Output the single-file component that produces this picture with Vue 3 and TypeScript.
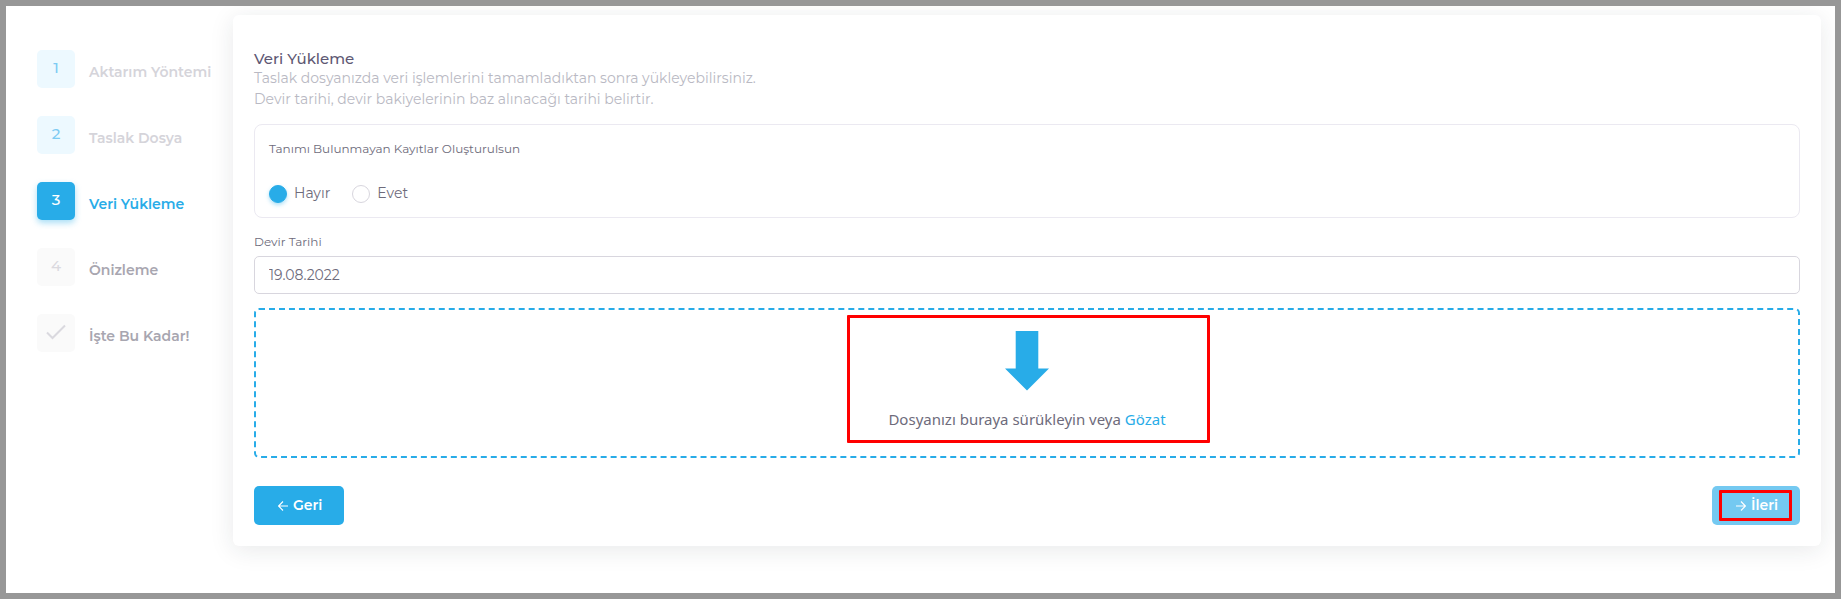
<script setup lang="ts">
import { ref } from 'vue'

type StepState = 'done' | 'active' | 'pending'

interface Step {
  id: number
  label: string
  state: StepState
  last?: boolean
}

const steps: Step[] = [
  { id: 1, label: 'Aktarım Yöntemi', state: 'done' },
  { id: 2, label: 'Taslak Dosya', state: 'done' },
  { id: 3, label: 'Veri Yükleme', state: 'active' },
  { id: 4, label: 'Önizleme', state: 'pending' },
  { id: 5, label: 'İşte Bu Kadar!', state: 'pending', last: true },
]

const createMissing = ref<'no' | 'yes'>('no')
const transferDate = ref('19.08.2022')
</script>

<template>
  <main class="wizard">
    <ol class="steps">
      <li v-for="step in steps" :key="step.id" class="step" :class="step.state">
        <span class="step-box">
          <svg v-if="step.last" width="20" height="16" viewBox="0 0 20 16" aria-hidden="true">
            <path d="M1 8.5 6.5 14 19 1.5" fill="none" stroke="currentColor" stroke-width="2" />
          </svg>
          <template v-else>{{ step.id }}</template>
        </span>
        <span class="step-label">{{ step.label }}</span>
      </li>
    </ol>

    <form class="card" @submit.prevent>
      <h1 class="title">Veri Yükleme</h1>
      <p class="description">
        Taslak dosyanızda veri işlemlerini tamamladıktan sonra yükleyebilirsiniz.<br />
        Devir tarihi, devir bakiyelerinin baz alınacağı tarihi belirtir.
      </p>

      <fieldset class="options" aria-labelledby="options-title">
        <div id="options-title" class="small-label">Tanımı Bulunmayan Kayıtlar Oluşturulsun</div>
        <div class="radios">
          <label class="radio">
            <input v-model="createMissing" type="radio" name="create-missing" value="no" />
            Hayır
          </label>
          <label class="radio">
            <input v-model="createMissing" type="radio" name="create-missing" value="yes" />
            Evet
          </label>
        </div>
      </fieldset>

      <label class="small-label date-label" for="transfer-date">Devir Tarihi</label>
      <input id="transfer-date" v-model="transferDate" class="date-input" type="text" />

      <div class="dropzone">
        <div class="drop-content">
          <svg class="drop-arrow" width="44" height="60" viewBox="0 0 44 60" aria-hidden="true">
            <path d="M10.7 0h22.6v37.5H44L22 59.5 0 37.5h10.7z" fill="currentColor" />
          </svg>
          <p class="drop-text">Dosyanızı buraya sürükleyin veya <a href="#">Gözat</a></p>
          <span class="mark mark-drop"></span>
        </div>
      </div>

      <div class="actions">
        <button type="button" class="btn">
          <svg width="10" height="10" viewBox="0 0 10 10" aria-hidden="true">
            <path d="M10 5H.8M5 .5.6 5 5 9.500" fill="none" stroke="currentColor" stroke-width="1.100" />
          </svg>
          Geri
        </button>
        <button type="button" class="btn next">
          <svg width="10" height="10" viewBox="0 0 10 10" aria-hidden="true">
            <path d="M0 5h9.200M5 .5 9.400 5 5 9.500" fill="none" stroke="currentColor" stroke-width="1.100" />
          </svg>
          İleri
          <span class="mark mark-next"></span>
        </button>
      </div>
    </form>
  </main>
</template>

<style>
body {
  background: #fff;
}
</style>

<style scoped>
.wizard,
.wizard * {
  box-sizing: border-box;
}

.wizard {
  display: grid;
  grid-template-columns: 227px minmax(0, 1fr);
  align-items: start;
  min-height: 100vh;
  padding: 9px 14px 40px 0;
  border: 6px solid #979797;
  background: #fff;
  color: #6e6b7b;
  font-family: Montserrat, Inter, "Liberation Sans", sans-serif;
  font-size: 14px;
  line-height: 21px;
  overflow: hidden;
}

.steps {
  display: flex;
  flex-direction: column;
  gap: 28px;
  margin: 0;
  padding: 35px 0 0 31px;
  list-style: none;
}

.step {
  display: flex;
  gap: 14px;
  height: 38px;
  white-space: nowrap;
}

.step-box {
  display: flex;
  justify-content: center;
  align-items: center;
  flex: none;
  width: 38px;
  height: 38px;
  padding-bottom: 3px;
  border-radius: 5px;
  font-size: 15px;
  font-weight: 500;
}

.step-label {
  padding-top: 12px;
  font-weight: 600;
}

.done .step-box {
  background: #edf9ff;
  color: #7dcbf3;
}

.done .step-label {
  color: #d5d4da;
}

.active .step-box {
  background: #28ace8;
  color: #fff;
  box-shadow: 0 3px 6px rgba(40, 172, 232, 0.4);
}

.active .step-label {
  color: #28ace8;
}

.pending .step-box {
  background: #fafafa;
  color: #dad9df;
}

.pending .step-label {
  color: #a8a6b0;
}

.card {
  display: flex;
  flex-direction: column;
  padding: 34px 21px 21px;
  border-radius: 6px;
  background: #fff;
  box-shadow: 0 4px 24px rgba(34, 41, 47, 0.1);
}

.title {
  margin: 0;
  color: #5e5873;
  font-size: 15px;
  font-weight: 500;
  line-height: 19px;
}

.description {
  margin: 0 0 14px;
  color: #b9b9c3;
}

.options {
  min-width: 0;
  height: 94px;
  margin: 0;
  padding: 14px;
  border: 1px solid #ebe9f1;
  border-radius: 8px;
}

.small-label {
  font-size: 12px;
  line-height: 20px;
}

.radios {
  display: flex;
  gap: 22px;
  margin-top: 24px;
}

.radio {
  display: flex;
  align-items: center;
  gap: 7px;
}

.radio input {
  appearance: none;
  width: 18px;
  height: 18px;
  margin: 0;
  border: 1px solid #d8d6de;
  border-radius: 50%;
  background: #fff;
}

.radio input:checked {
  border-color: #28ace8;
  background: #28ace8;
  box-shadow: 0 2px 4px rgba(40, 172, 232, 0.4);
}

.date-label {
  align-self: flex-start;
  margin: 14px 0 4px;
}

.date-input {
  width: 100%;
  height: 38px;
  padding: 0 14px;
  border: 1px solid #d8d6de;
  border-radius: 5px;
  background: #fff;
  color: #6e6b7b;
  font: inherit;
}

.dropzone {
  display: flex;
  justify-content: center;
  align-items: flex-start;
  height: 150px;
  margin-top: 14px;
  padding-top: 21px;
  border: 2px dashed #28ace8;
  border-radius: 5px;
}

.drop-content {
  position: relative;
  display: flex;
  flex-direction: column;
  align-items: center;
}

.drop-arrow {
  color: #28ace8;
}

.drop-text {
  margin: 17px 0 0;
  font-family: "Segoe UI", "Noto Sans", sans-serif;
  font-size: 15px;
  line-height: 22px;
  white-space: nowrap;
}

.drop-text a {
  color: #28ace8;
  text-decoration: none;
}

.actions {
  display: flex;
  justify-content: space-between;
  margin-top: 28px;
}

.btn {
  position: relative;
  display: flex;
  align-items: center;
  gap: 5px;
  height: 39px;
  padding: 0 22px 0 24px;
  border: 0;
  border-radius: 5px;
  background: #28ace8;
  color: #fff;
  font: inherit;
  font-weight: 600;
}

.next {
  background: #74c9f1;
}

.mark {
  position: absolute;
  border: 3px solid #f00;
  border-radius: 1px;
  pointer-events: none;
}

.mark-drop {
  inset: -16px -44px -13px -41px;
}

.mark-next {
  inset: 4px 8px 4px 7px;
}
</style>
